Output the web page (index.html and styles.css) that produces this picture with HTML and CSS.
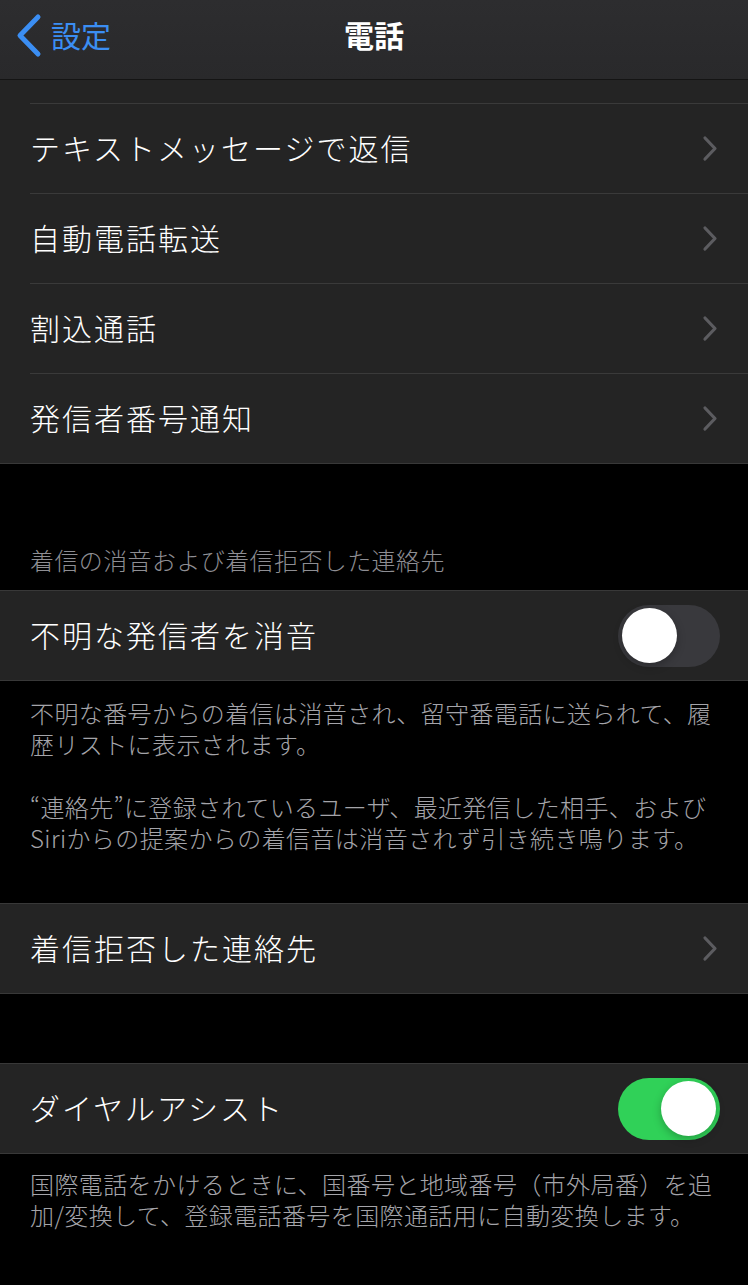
FILE: index.html
```
<!DOCTYPE html>
<html lang="ja">
<head>
  <title>電話</title>
  <meta name="viewport" content="width=device-width, initial-scale=1.0">
  <link rel="stylesheet" href="styles.css">
</head>
<body>
  <nav class="navbar">
    <a href="#" class="goback">
      <svg class="goback-icon" width="28" height="45" viewBox="0 0 28 45">
        <polyline points="23,4 5,22.5 23,41" fill="none" stroke="#3b8ef3" stroke-width="5" stroke-linecap="round" stroke-linejoin="round"/>
      </svg>
      <span>設定</span>
    </a>
    <h1 class="title">電話</h1>
    <div></div>
  </nav>

  <section class="group group-first">
    <div class="cell cell-sliver"><div class="cell-inner"></div></div>
    <div class="cell"><div class="cell-inner"><span class="label">テキストメッセージで返信</span><svg class="chevron" width="16" height="27" viewBox="0 0 16 27"><polyline points="3,3 13,13.5 3,24" fill="none" stroke="#5c5c60" stroke-width="3.2" stroke-linecap="round" stroke-linejoin="round"/></svg></div></div>
    <div class="cell"><div class="cell-inner"><span class="label">自動電話転送</span><svg class="chevron" width="16" height="27" viewBox="0 0 16 27"><polyline points="3,3 13,13.5 3,24" fill="none" stroke="#5c5c60" stroke-width="3.2" stroke-linecap="round" stroke-linejoin="round"/></svg></div></div>
    <div class="cell"><div class="cell-inner"><span class="label">割込通話</span><svg class="chevron" width="16" height="27" viewBox="0 0 16 27"><polyline points="3,3 13,13.5 3,24" fill="none" stroke="#5c5c60" stroke-width="3.2" stroke-linecap="round" stroke-linejoin="round"/></svg></div></div>
    <div class="cell"><div class="cell-inner"><span class="label">発信者番号通知</span><svg class="chevron" width="16" height="27" viewBox="0 0 16 27"><polyline points="3,3 13,13.5 3,24" fill="none" stroke="#5c5c60" stroke-width="3.2" stroke-linecap="round" stroke-linejoin="round"/></svg></div></div>
  </section>

  <p class="group-header">着信の消音および着信拒否した連絡先</p>

  <section class="group">
    <div class="cell"><div class="cell-inner"><span class="label">不明な発信者を消音</span><span class="switch"><span class="knob"></span></span></div></div>
  </section>

  <div class="group-footer footer-long">
    <p>不明な番号からの着信は消音され、留守番電話に送られて、履<br>歴リストに表示されます。</p>
    <p>“連絡先”に登録されているユーザ、最近発信した相手、および<br>Siriからの提案からの着信音は消音されず引き続き鳴ります。</p>
  </div>

  <section class="group">
    <div class="cell"><div class="cell-inner"><span class="label">着信拒否した連絡先</span><svg class="chevron" width="16" height="27" viewBox="0 0 16 27"><polyline points="3,3 13,13.5 3,24" fill="none" stroke="#5c5c60" stroke-width="3.2" stroke-linecap="round" stroke-linejoin="round"/></svg></div></div>
  </section>

  <div class="spacer"></div>

  <section class="group">
    <div class="cell"><div class="cell-inner"><span class="label">ダイヤルアシスト</span><span class="switch on"><span class="knob"></span></span></div></div>
  </section>

  <div class="group-footer">
    <p>国際電話をかけるときに、国番号と地域番号（市外局番）を追<br>加/変換して、登録電話番号を国際通話用に自動変換します。</p>
  </div>
</body>
</html>
```
FILE: styles.css
```
body {
  background-color: #000;
  margin: 0;
  padding: 0;
  font-family: "Noto Sans CJK JP", "Noto Sans", sans-serif;
  color: #fff;
  width: 748px;
}

.navbar {
  height: 79px;
  background: linear-gradient(#2d2d2f, #29292b);
  border-bottom: 1px solid #141414;
  display: grid;
  grid-template-columns: 1fr auto 1fr;
  align-items: center;
}

.goback {
  display: flex;
  align-items: center;
  gap: 8px;
  padding-left: 15px;
  color: #3b8ef3;
  font-size: 30px;
  text-decoration: none;
  height: 79px;
}

.goback-icon {
  display: block;
  margin-top: -8px;
}

.goback span {
  margin-top: -12px;
}

.title {
  margin: -12px 0 0;
  font-size: 30px;
  font-weight: 700;
}

.group {
  background-color: #242424;
  border-top: 1px solid #383838;
  border-bottom: 1px solid #383838;
}

.group-first {
  border-top: none;
}

.cell {
  padding-left: 30px;
}

.cell-inner {
  height: 89px;
  display: flex;
  align-items: center;
  justify-content: space-between;
  border-bottom: 1px solid #3a3a3a;
  padding-right: 28px;
}

.cell-sliver .cell-inner {
  height: 23px;
}

.cell:last-child .cell-inner {
  border-bottom: none;
}

.label {
  font-size: 30px;
  font-weight: 300;
  letter-spacing: 2px;
  color: #fff;
  margin-top: -4px;
}

.chevron {
  display: block;
  margin-right: 2px;
}

.switch {
  width: 102px;
  height: 62px;
  border-radius: 31px;
  background-color: #39393d;
  display: flex;
  align-items: center;
  padding: 0 4px;
  box-sizing: border-box;
}

.switch.on {
  background-color: #30d158;
  justify-content: flex-end;
}

.knob {
  width: 55px;
  height: 55px;
  border-radius: 50%;
  background-color: #fff;
  box-shadow: 0 3px 8px rgba(0, 0, 0, 0.25);
}

.group-header {
  margin: 0;
  padding: 81px 30px 15px;
  font-size: 24px;
  font-weight: 300;
  letter-spacing: 0.4px;
  line-height: 30px;
  color: #8e8e93;
}

.group-footer {
  padding: 14px 30px 0;
  font-size: 24px;
  font-weight: 300;
  letter-spacing: 0.4px;
  line-height: 31px;
  color: #a4a4a9;
}

.group-footer p {
  margin: 0;
}

.footer-long {
  padding-top: 16px;
  padding-bottom: 50px;
}

.footer-long p + p {
  margin-top: 32px;
}

.spacer {
  height: 69px;
}
```
